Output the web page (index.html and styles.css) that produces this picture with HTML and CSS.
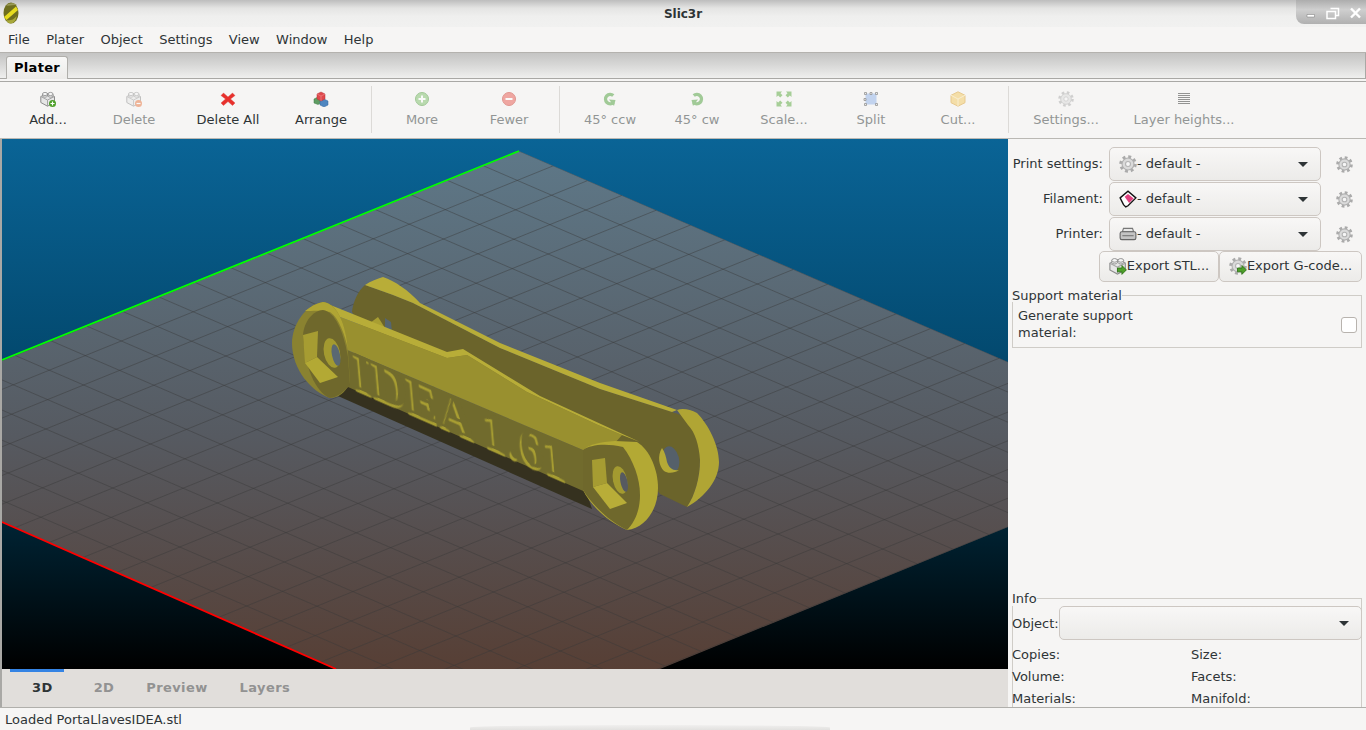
FILE: index.html
```html
<!DOCTYPE html>
<html lang="en">
<head>
    <meta charset="UTF-8">
    <title>Slic3r</title>
    <link rel="stylesheet" href="styles.css">
</head>
<body>
    <svg class="icon-defs" width="0" height="0">
        <symbol id="i-brick" viewBox="0 0 16 16">
            <path d="M.8 5.500 7.500 2.500 14.500 5.500v6l-7 3.700-6.700-3.700z" fill="#e6e6e6" stroke="#8c8c8c"/>
            <path d="M.8 5.500l6.700 3.500 7-3.500M7.500 9v6" fill="none" stroke="#a5a5a5"/>
            <path d="M2.500 3v2c0 1.600 5 1.600 5 0V3zM8 3v2c0 1.600 5 1.600 5 0V3z" fill="#ececec" stroke="#8c8c8c" stroke-width=".8"/>
            <ellipse cx="5" cy="3" rx="2.500" ry="1.600" fill="#f6f6f6" stroke="#8c8c8c" stroke-width=".8"/>
            <ellipse cx="10.500" cy="3" rx="2.500" ry="1.600" fill="#f6f6f6" stroke="#8c8c8c" stroke-width=".8"/>
        </symbol>
        <symbol id="i-gear" viewBox="0 0 16 16">
            <circle cx="8" cy="8" r="6.300" fill="none" stroke="#aaa" stroke-width="3" stroke-dasharray="2.500 2.450"/>
            <circle cx="8" cy="8" r="5.300" fill="#dadada" stroke="#b0b0b0"/>
            <circle cx="8" cy="8" r="2.200" fill="#f6f6f6" stroke="#b4b4b4"/>
        </symbol>
        <symbol id="i-go" viewBox="0 0 8 8">
            <path d="M.5 2.500h3.500V.5L7.500 4 4 7.500v-2H.5z" fill="#4ea02a" stroke="#2f7416" stroke-width=".7"/>
        </symbol>
    </svg>

    <div class="window">
        <header class="titlebar">
            <svg class="logo" viewBox="0 0 16 22">
                <ellipse cx="8" cy="11" rx="7.500" ry="10.500" fill="#6e6e1e"/>
                <path d="M3 3.500C6 1 11 .5 14 3 10 3 6 4 3 3.500z" fill="#9a9a55"/>
                <path d="M1 15 13 4.500 15 8 3.500 18z" fill="#e6dc1e"/>
                <path d="M3.500 18c3 .5 7 .5 10-4 0 4-3 7.500-6 7.500-2 0-3.500-1.500-4-3.500z" fill="#a8a83a"/>
            </svg>
            <span class="title">Slic3r</span>
            <div class="winctl">
                <svg width="70" height="24" viewBox="0 0 70 24">
                    <path d="M11 14.500h7.500v2.500H11z" fill="#fff" stroke="#777" stroke-width=".5"/>
                    <path d="M34.500 8.500h8v7h-3" fill="none" stroke="#fff" stroke-width="1.500"/>
                    <path d="M31 11.500h8.500v7H31z" fill="none" stroke="#fff" stroke-width="1.500"/>
                    <path d="M55 8.500l9 9M64 8.500l-9 9" stroke="#fff" stroke-width="2.400"/>
                </svg>
            </div>
        </header>

        <nav class="menubar">
            <span>File</span><span>Plater</span><span>Object</span><span>Settings</span><span>View</span><span>Window</span><span>Help</span>
        </nav>

        <div class="tabbar"><div class="tab">Plater</div></div>

        <div class="toolbar">
            <div class="tool">
                <svg class="ticon" viewBox="0 0 16 16"><use href="#i-brick"/><circle cx="12.500" cy="12.500" r="3.500" fill="#4ea02a"/><path d="M10.500 12.500h4M12.500 10.500v4" stroke="#fff" stroke-width="1.200"/></svg>
                <span>Add...</span>
            </div>
            <div class="tool off">
                <svg class="ticon" viewBox="0 0 16 16"><use href="#i-brick"/><circle cx="12.500" cy="12.500" r="3.500" fill="#e8743c"/><path d="M10.500 12.500h4" stroke="#fff" stroke-width="1.200"/></svg>
                <span>Delete</span>
            </div>
            <div class="tool">
                <svg class="ticon" viewBox="0 0 16 16"><path d="M3.500 2 8 6l4.500-4L15 4.500 10.500 8l4.500 4-2.500 2.500L8 10.500 3.500 14.500 1 12l4.500-4L1 4.500z" fill="#e8302c" stroke="#d8403a" stroke-width=".4"/></svg>
                <span>Delete All</span>
            </div>
            <div class="tool">
                <svg class="ticon" viewBox="0 0 16 16">
                    <path d="M1 8l4-2 3 1.500V12l-3 1.500L1 12z" fill="#5f9c62" stroke="#3f7a44" stroke-width=".5"/>
                    <path d="M7 10l4-2 4 2v4l-4 2-4-2z" fill="#4f86c0" stroke="#34679d" stroke-width=".5"/>
                    <path d="M4 3l4-2 4 2v5l-4 2-4-2z" fill="#e0484c" stroke="#b53236" stroke-width=".5"/>
                    <path d="M4 3l4 2 4-2M8 5v5" fill="none" stroke="#f09090" stroke-width=".6"/>
                </svg>
                <span>Arrange</span>
            </div>
            <div class="sep"></div>
            <div class="tool off">
                <svg class="ticon" viewBox="0 0 16 16"><circle cx="8" cy="8" r="6.500" fill="#7dc06a" stroke="#4e9a3c"/><path d="M4.500 8h7M8 4.500v7" stroke="#fff" stroke-width="2"/></svg>
                <span>More</span>
            </div>
            <div class="tool off">
                <svg class="ticon" viewBox="0 0 16 16"><circle cx="8" cy="8" r="6.500" fill="#ea5a50" stroke="#c8372c"/><path d="M4.500 8h7" stroke="#fff" stroke-width="2"/></svg>
                <span>Fewer</span>
            </div>
            <div class="sep"></div>
            <div class="tool off">
                <svg class="ticon" viewBox="0 0 16 16"><path d="M11.500 11.500A4.700 4.700 0 1 1 11.300 4.500" fill="none" stroke="#4ea03c" stroke-width="3.400"/><path d="M7 8.500l6.500 .5-1.500 6z" fill="#4ea03c"/></svg>
                <span>45° ccw</span>
            </div>
            <div class="tool off">
                <svg class="ticon" viewBox="0 0 16 16"><path d="M4.500 11.500A4.700 4.700 0 1 0 4.700 4.500" fill="none" stroke="#4ea03c" stroke-width="3.400"/><path d="M9 8.500 2.500 9 4 15z" fill="#4ea03c"/></svg>
                <span>45° cw</span>
            </div>
            <div class="tool off">
                <svg class="ticon" viewBox="0 0 16 16" fill="#58a83c">
                    <path d="M.5.500h5.500L4.500 2.200 6.500 4.200 4.200 6.500 2.200 4.500.5 6z"/>
                    <path d="M15.500.500H10l1.500 1.700-2 2 2.300 2.300 2-2L15.500 6z"/>
                    <path d="M.5 15.500H6l-1.500-1.700 2-2-2.300-2.300-2 2L.5 10z"/>
                    <path d="M15.500 15.500H10l1.500-1.700-2-2 2.300-2.300 2 2 1.700-1.500z"/>
                </svg>
                <span>Scale...</span>
            </div>
            <div class="tool off">
                <svg class="ticon" viewBox="0 0 16 16">
                    <rect x="2.500" y="2.500" width="11" height="11" fill="#8fb2ea"/>
                    <path d="M1.500 1.500h2v2h-2zM7 1.500h2v2H7zM12.500 1.500h2v2h-2zM1 7.500h2v2H1zM12.500 12.500h2v2h-2zM1.500 12.500h2v2h-2z" fill="#e4e4e4" stroke="#333" stroke-width=".8"/>
                </svg>
                <span>Split</span>
            </div>
            <div class="tool off">
                <svg class="ticon" viewBox="0 0 16 16">
                    <path d="M8 .8l7 3.500v7.400l-7 3.500-7-3.500V4.300z" fill="#f3c95e" stroke="#d99e2c"/>
                    <path d="M1 4.300 8 8l7-3.700M8 8v7" fill="none" stroke="#fbe7ad"/>
                </svg>
                <span>Cut...</span>
            </div>
            <div class="sep"></div>
            <div class="tool off">
                <svg class="ticon" viewBox="0 0 16 16"><use href="#i-gear"/></svg>
                <span>Settings...</span>
            </div>
            <div class="tool off">
                <svg class="ticon" viewBox="0 0 16 16"><path d="M2 2.500h12M2 4.500h12M2 6.500h12M2 8.500h12M2 10.500h12M2 12.500h12" stroke="#333" stroke-width="1"/></svg>
                <span>Layer heights...</span>
            </div>
        </div>

        <main class="main">
            <section class="viewer">
                <svg class="canvas" width="1006" height="530" viewBox="2 139 1006 530">
                    <defs>
                        <linearGradient id="sky" gradientUnits="userSpaceOnUse" x1="0" y1="139" x2="0" y2="669">
                            <stop offset="0" stop-color="#0a6496"/>
                            <stop offset=".4" stop-color="#034a70"/>
                            <stop offset=".75" stop-color="#00202f"/>
                            <stop offset="1" stop-color="#000"/>
                        </linearGradient>
                        <linearGradient id="plate" gradientUnits="userSpaceOnUse" x1="0" y1="151" x2="0" y2="669">
                            <stop offset="0" stop-color="#5e7888"/>
                            <stop offset=".55" stop-color="#565a61"/>
                            <stop offset="1" stop-color="#573f35"/>
                        </linearGradient>
                        <clipPath id="plate-clip">
                            <polygon points="519,151 1008,362 1008,527 660,669 336,669 2,522 2,360"/>
                        </clipPath>
                    </defs>
                    <rect x="2" y="139" width="1006" height="530" fill="url(#sky)"/>
                    <polygon points="519,151 1008,362 1008,527 660,669 336,669 2,522 2,360" fill="url(#plate)"/>
                    <!-- plate grid: 20 x 20 cells, one line per step from the back corner -->
                    <g clip-path="url(#plate-clip)" fill="none" stroke="#3a3a3a" stroke-opacity=".45" stroke-width="1">
                        <path d="M519 151l-720 292M553.300 165.800l-720 292M587.600 180.600l-720 292M621.900 195.400l-720 292M656.200 210.200l-720 292M690.500 225l-720 292M724.800 239.800l-720 292M759.100 254.600l-720 292M793.400 269.400l-720 292M827.700 284.200l-720 292M862 299l-720 292M896.300 313.800l-720 292M930.600 328.600l-720 292M964.900 343.400l-720 292M999.200 358.200l-720 292M1033.500 373l-720 292M1067.800 387.800l-720 292M1102.100 402.600l-720 292M1136.400 417.400l-720 292M1170.700 432.200l-720 292M1205 447l-720 292"/>
                        <path d="M519 151l686 296M483 165.600l686 296M447 180.200l686 296M411 194.800l686 296M375 209.400l686 296M339 224l686 296M303 238.600l686 296M267 253.200l686 296M231 267.800l686 296M195 282.400l686 296M159 297l686 296M123 311.600l686 296M87 326.200l686 296M51 340.800l686 296M15 355.400l686 296M-21 370l686 296M-57 384.600l686 296M-93 399.200l686 296M-129 413.800l686 296M-165 428.400l686 296M-201 443l686 296"/>
                    </g>
                    <path d="M2 360 519 151" stroke="#00ff00" stroke-width="1.800" fill="none"/>
                    <path d="M2 522 336 669" stroke="#ff0000" stroke-width="1.800" fill="none"/>

                    <!-- the printed part -->
                    <g class="part">
                        <polygon points="338,396 348,385 585,488 592,509" fill="#35311f"/>
                        <path d="M352 312C353 302 358 291 365 285L393 295 413 303 500 348 600 389 672 412 690 418C696 428 700 442 700 458 700 478 695 495 687 507L660 494 640 470 500 400 370 340Z" fill="#6b642b"/>
                        <path d="M365 285C371 281 377 279 383 277 395 281 408 290 420 303L500 343 600 383 677 410 672 412 600 389 500 348 413 303 393 295Z" fill="#b8ad38"/>
                        <path d="M677 410C682 408 690 409 697 413 708 424 719 445 719 462 719 480 705 497 687 507 695 495 700 478 700 460 699 445 695 432 688 425Z" fill="#b0a534"/>
                        <ellipse cx="671" cy="459" rx="8" ry="13" transform="rotate(-15 671 459)" fill="#55606a"/>
                        <path d="M662 448c-5 8-3 18 2 23 4 3 11 2 15-1-6 1-10-2-12-8-1-5-2-10-5-14z" fill="#b5aa36"/>
                        <polygon points="370,323 378,317 385,328" fill="#a89e32"/>
                        <polygon points="385,318 391,322 392,332 385,328" fill="#55656f"/>
                        <polygon points="345,349 590,453 600,460 590,494 348,387 340,375" fill="#716b2d"/>
                        <polygon points="323,302 335,315 447,358 467,355 527,392 598,425 622,435 600,460 590,453 345,349 335,330" fill="#99902f"/>
                        <polygon points="323,302 447,352 463,349 540,396 640,442 622,435 598,425 527,392 467,355 447,358 335,315" fill="#b8ad38"/>
                        <text class="part-text" transform="matrix(1 .44 .1 1.150 356 388)">IDEA 1.61</text>

                        <!-- left head -->
                        <path d="M292 343C292 325 305 305 323 302 338 304 346 325 348 352L350 383C345 393 338 398 330 398 312 392 292 370 292 343Z" fill="#8a8230"/>
                        <path d="M305 311C311 306 317 303 323 302 338 304 346 325 348 350 345 335 339 318 330 312 322 310 312 311 305 311Z" fill="#b0a534"/>
                        <path d="M303 335C304 322 312 311 323 310 335 312 343 330 348 357L350 385C343 393 337 397 330 398 320 395 305 375 303 335Z" fill="#6f682c"/>
                        <polygon points="303,335 318,331 317,357 305,363" fill="#a69c32"/>
                        <polygon points="305,363 317,357 338,377 320,383" fill="#b3a934"/>
                        <ellipse cx="332" cy="353" rx="8" ry="15" transform="rotate(-12 332 353)" fill="#a39a30"/>
                        <ellipse cx="336" cy="355" rx="4" ry="11" transform="rotate(-12 336 355)" fill="#5a6872"/>

                        <!-- right head -->
                        <path d="M583 450C590 444 600 442 615 441L637 442C650 450 658 470 658 488 658 510 645 528 627 530 608 522 590 505 583 490Z" fill="#b3a934"/>
                        <path d="M583 450C590 445 605 443 623 447 633 460 640 478 640 495 640 510 635 522 627 530 610 522 592 505 583 490Z" fill="#6f682c"/>
                        <polygon points="592,460 605,458 607,483 593,487" fill="#a69c32"/>
                        <polygon points="593,487 607,483 627,503 610,509" fill="#b8ad38"/>
                        <ellipse cx="620" cy="480" rx="7" ry="14" transform="rotate(-12 620 480)" fill="#a39a30"/>
                        <ellipse cx="624" cy="482" rx="3.500" ry="10" transform="rotate(-12 624 482)" fill="#565a60"/>
                    </g>
                </svg>
                <div class="viewtabs">
                    <span class="vtab active">3D</span>
                    <span class="vtab">2D</span>
                    <span class="vtab">Preview</span>
                    <span class="vtab">Layers</span>
                </div>
            </section>

            <aside class="side">
                <div class="presets">
                    <label>Print settings:</label>
                    <div class="combo"><svg class="cicon" viewBox="0 0 16 16"><use href="#i-gear"/></svg>- default -</div>
                    <svg class="cog" viewBox="0 0 16 16"><use href="#i-gear"/></svg>

                    <label>Filament:</label>
                    <div class="combo">
                        <svg class="cicon" viewBox="0 0 16 16">
                            <path d="M1 7 8 1l7 6-7 7-2 1-2-2-1-2z" fill="#fff" stroke="#111" stroke-width="1.200"/>
                            <path d="M5 6l3-2.500 5 4-4 4z" fill="#e0407e"/>
                        </svg>- default -
                    </div>
                    <svg class="cog" viewBox="0 0 16 16"><use href="#i-gear"/></svg>

                    <label>Printer:</label>
                    <div class="combo">
                        <svg class="cicon" viewBox="0 0 16 16">
                            <path d="M4 3h8l1 3H3z" fill="#e8e8e8" stroke="#777"/>
                            <rect x="1" y="6" width="14" height="7" rx="1.500" fill="#c4c4c4" stroke="#666"/>
                            <path d="M3 9.500h10" stroke="#777"/>
                        </svg>- default -
                    </div>
                    <svg class="cog" viewBox="0 0 16 16"><use href="#i-gear"/></svg>
                </div>

                <div class="exports">
                    <button class="btn stl"><svg class="cicon" viewBox="0 0 16 16"><use href="#i-brick"/><use href="#i-go" x="7" y="7" width="9" height="9"/></svg>Export STL...</button>
                    <button class="btn gcode"><svg class="cicon" viewBox="0 0 16 16"><use href="#i-gear"/><use href="#i-go" x="7" y="7" width="9" height="9"/></svg>Export G-code...</button>
                </div>

                <fieldset class="group support">
                    <legend>Support material</legend>
                    <div class="support-row">
                        <span class="support-label">Generate support material:</span>
                        <span class="check"></span>
                    </div>
                </fieldset>

                <fieldset class="group info">
                    <legend>Info</legend>
                    <div class="object-row">
                        <span>Object:</span>
                        <div class="combo"></div>
                    </div>
                    <div class="info-grid">
                        <span>Copies:</span><span>Size:</span>
                        <span>Volume:</span><span>Facets:</span>
                        <span>Materials:</span><span>Manifold:</span>
                    </div>
                </fieldset>
            </aside>
        </main>

        <footer class="status">Loaded PortaLlavesIDEA.stl</footer>
        <div class="dock-edge"></div>
    </div>
</body>
</html>
```

FILE: styles.css
```css
body {
    margin: 0;
    font-family: "DejaVu Sans", sans-serif;
    font-size: 13px;
    color: #2e3436;
    background-color: #f6f5f4;
    overflow: hidden;
}

.icon-defs {
    position: absolute;
}

.window {
    position: relative;
    display: flex;
    flex-direction: column;
    width: 1366px;
    height: 730px;
    overflow: hidden;
}

.titlebar {
    display: grid;
    grid-template-columns: 1fr auto 1fr;
    align-items: start;
    height: 27px;
    background: linear-gradient(#bdbdbd, #e4e4e3 30%, #efefee 60%, #f1f1f0);
}

.logo {
    width: 16px;
    height: 22px;
    margin: 2px 0 0 3px;
}

.title {
    margin-top: 7px;
    font-size: 12px;
    line-height: 15px;
    font-weight: bold;
}

.winctl {
    justify-self: end;
    width: 70px;
    height: 24px;
    border-bottom-left-radius: 8px;
    background: linear-gradient(#adadad, #cfcfcf 40%, #b0b0b0);
}

.winctl svg {
    display: block;
}

.menubar {
    display: flex;
    align-items: center;
    gap: 16.4px;
    height: 25px;
    padding-left: 8px;
    background-color: #f6f5f4;
    border-bottom: 1px solid #b4b2ae;
}

.tabbar {
    height: 25px;
    padding-left: 6px;
    background: linear-gradient(#c4c4c3, #d4d4d3 40%, #efefee);
    border-bottom: 1px solid #a9a8a5;
    border-right: 1px solid #a9a8a5;
}

.tab {
    width: 60px;
    height: 22px;
    margin-top: 3px;
    line-height: 21px;
    text-align: center;
    font-weight: bold;
    letter-spacing: .3px;
    color: #000;
    background: linear-gradient(#f8f8f7, #ecebe9);
    border: 1px solid #b0afab;
    border-bottom: none;
    border-radius: 3px 3px 0 0;
}

.toolbar {
    display: grid;
    grid-template-columns: 86px 86px 102px 84px 17px 84px 90px 11px 90px 84px 90px 84px 90px 11px 104px 132px;
    height: 56px;
    margin-top: 2px;
    padding-left: 5px;
    background-color: #f6f5f4;
    border-top: 1px solid #a9a8a5;
    border-bottom: 1px solid #bab8b3;
}

.tool {
    display: flex;
    flex-direction: column;
    align-items: center;
    padding-top: 9px;
    white-space: nowrap;
}

.tool span {
    margin-top: 4px;
    line-height: 17px;
}

.ticon {
    width: 16px;
    height: 16px;
}

.tool.off {
    color: #929595;
}

.tool.off .ticon {
    opacity: .5;
}

.sep {
    justify-self: center;
    width: 1px;
    height: 47px;
    margin-top: 4px;
    background-color: #dcdad7;
}

.main {
    display: flex;
    height: 568px;
    border-bottom: 1px solid #b0afab;
}

.viewer {
    display: flex;
    flex-direction: column;
    width: 1006px;
    border-left: 2px solid #a9a8a5;
}

.canvas {
    display: block;
}

.viewtabs {
    display: flex;
    height: 38px;
    background-color: #e1dedb;
    font-weight: bold;
}

.vtab {
    padding: 0 16px;
    line-height: 31px;
    color: #929292;
    border-top: 3px solid transparent;
    letter-spacing: .4px;
}

.vtab.active {
    margin: 0 14px 0 8px;
    padding: 0 11px 0 22px;
    color: #2e3436;
    border-top-color: #3584e4;
}

.part-text {
    font-family: "Liberation Serif", serif;
    font-size: 48px;
    font-weight: bold;
    fill: #716b2d;
    filter: drop-shadow(-2px 3px 0 #a89e32);
}

.side {
    display: flex;
    flex-direction: column;
    width: 358px;
    box-sizing: border-box;
    padding: 8px 4px 0 4px;
}

.presets {
    display: grid;
    grid-template-columns: 91px 212px 1fr;
    grid-auto-rows: 34px;
    row-gap: 1px;
    column-gap: 6px;
    align-items: center;
}

.presets label {
    padding-bottom: 2px;
    text-align: right;
    white-space: nowrap;
}

.combo {
    display: flex;
    align-items: center;
    position: relative;
    height: 32px;
    box-sizing: content-box;
    padding-left: 9px;
    border: 1px solid #cdc7c2;
    border-radius: 5px;
    background: linear-gradient(#f8f7f6, #ecebe9);
}

.presets .combo {
    height: 31px;
    padding-bottom: 1px;
    box-sizing: content-box;
    width: 201px;
}

.combo::after {
    content: "";
    position: absolute;
    right: 12px;
    top: 14px;
    border-left: 5px solid transparent;
    border-right: 5px solid transparent;
    border-top: 5px solid #2e3436;
}

.cicon {
    flex: none;
    width: 18px;
    height: 18px;
}

.cog {
    width: 17px;
    height: 17px;
    margin-left: 9px;
}

.exports {
    display: flex;
    justify-content: flex-end;
}

.btn {
    display: flex;
    align-items: center;
    justify-content: center;
    height: 31px;
    padding: 0 0 2px;
    font: inherit;
    color: inherit;
    border: 1px solid #cdc7c2;
    border-radius: 5px;
    background: linear-gradient(#f8f7f6, #ecebe9);
}

.btn.stl {
    width: 120px;
}

.btn.gcode {
    width: 143px;
}

.group {
    margin: 6px 0 0;
    padding: 0;
    border: 1px solid #cfccc7;
}

.group legend {
    margin-left: -1px;
    padding: 0;
    line-height: 15px;
}

.support legend {
    line-height: 13px;
}

.support {
    height: 59px;
    margin-top: 7px;
    box-sizing: border-box;
}

.support-row {
    display: flex;
    justify-content: space-between;
    align-items: center;
    padding: 5px 4px 0 5px;
}

.support-label {
    width: 130px;
    line-height: 17px;
}

.check {
    width: 14px;
    height: 14px;
    margin-top: 2px;
    border: 1px solid #b8b3ae;
    border-radius: 3px;
    background-color: #fff;
}

.info {
    margin-top: auto;
    height: 116px;
    box-sizing: border-box;
    border-bottom: none;
}

.object-row {
    display: flex;
    align-items: center;
    margin: 0 -1px 0 -1px;
}

.object-row .combo {
    flex: 1;
}

.info-grid {
    display: grid;
    grid-template-columns: 179px 1fr;
    grid-auto-rows: 22px;
    align-items: center;
    margin: 3px 0 0 -1px;
}

.status {
    display: flex;
    align-items: center;
    flex: 1;
    padding-left: 5px;
    background-color: #f6f5f4;
}

.dock-edge {
    position: absolute;
    left: 470px;
    bottom: 0;
    width: 360px;
    height: 5px;
    border-radius: 50% 50% 0 0;
    background: linear-gradient(#f0efee, #e2e1df);
}
```
